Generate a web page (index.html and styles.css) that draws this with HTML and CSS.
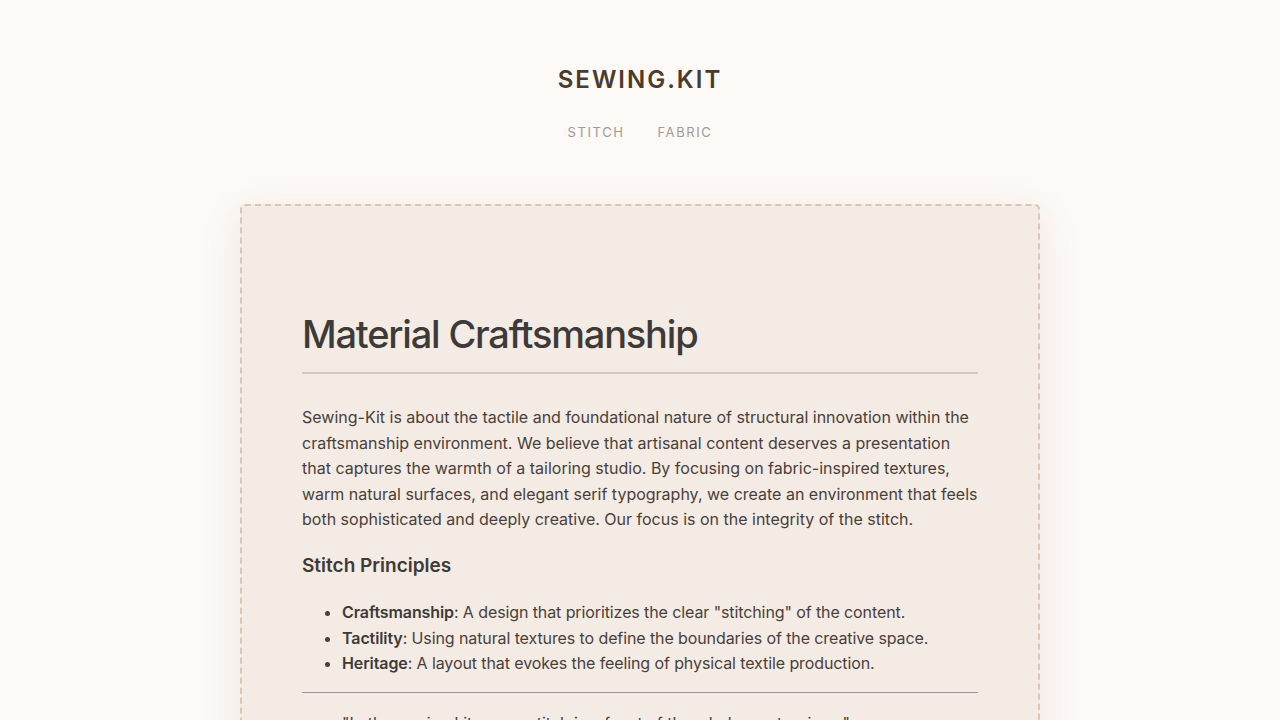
FILE: index.html
```html
<!DOCTYPE html>
<html lang="en">
<head>
  <meta charset="UTF-8">
  <meta name="viewport" content="width=device-width, initial-scale=1">
  <title>Sewing.Kit</title>
  <link rel="stylesheet" href="styles.css">
</head>
<body>

  <header class="site-header">
    <h1 class="logo">SEWING.KIT</h1>
    <nav class="nav">
      <a href="#">Stitch</a>
      <a href="#">Fabric</a>
    </nav>
  </header>

  <main class="card">
    <h2>Material Craftsmanship</h2>
    <p>Sewing-Kit is about the tactile and foundational nature of structural innovation within the craftsmanship environment. We believe that artisanal content deserves a presentation that captures the warmth of a tailoring studio. By focusing on fabric-inspired textures, warm natural surfaces, and elegant serif typography, we create an environment that feels both sophisticated and deeply creative. Our focus is on the integrity of the stitch.</p>

    <h3>Stitch Principles</h3>
    <ul>
      <li><strong>Craftsmanship</strong>: A design that prioritizes the clear "stitching" of the content.</li>
      <li><strong>Tactility</strong>: Using natural textures to define the boundaries of the creative space.</li>
      <li><strong>Heritage</strong>: A layout that evokes the feeling of physical textile production.</li>
    </ul>

    <hr>

    <blockquote>"In the sewing kit, every stitch is a facet of the whole masterpiece."</blockquote>
  </main>

</body>
</html>
```

FILE: styles.css
```css
* {
  margin: 0;
  padding: 0;
  box-sizing: border-box;
}

body {
  background: #fdf9f6;
  font-family: 'Inter', sans-serif;
  color: #4a403a;
}

.site-header {
  text-align: center;
  padding-top: 64px;
}

.logo {
  font-size: 24px;
  font-weight: 600;
  letter-spacing: 2px;
  color: #4a3b2c;
  line-height: 32px;
}

.nav {
  display: flex;
  justify-content: center;
  gap: 33px;
  margin-top: 28px;
}

.nav a {
  font-size: 13px;
  letter-spacing: 1.6px;
  text-transform: uppercase;
  color: #9e9a97;
  text-decoration: none;
}

.card {
  width: 800px;
  margin: 64px auto 0;
  padding: 104px 60px 60px;
  background: #f3ebe4;
  border: 2px dashed #d8c6b8;
  border-radius: 5px;
  box-shadow: 0 10px 40px rgba(120, 90, 60, 0.12);
}

.card h2 {
  font-size: 38px;
  font-weight: 500;
  line-height: 48px;
  letter-spacing: -1.2px;
  color: #3d3a38;
  padding-bottom: 14px;
  border-bottom: 2px solid #d8c6b8;
  margin-bottom: 31px;
}

.card p {
  font-size: 16px;
  line-height: 25.6px;
}

.card h3 {
  font-size: 19px;
  font-weight: 600;
  color: #3d3a38;
  margin: 21px 0 23px;
}

.card ul {
  padding-left: 40px;
  font-size: 16px;
  line-height: 25.6px;
  letter-spacing: -0.1px;
}

.card strong {
  font-weight: 600;
  color: #3d3a38;
}

.card hr {
  border: none;
  border-top: 1px solid #9a9590;
  margin: 15px 0 18px;
}

.card blockquote {
  padding-left: 40px;
  font-size: 16px;
  line-height: 25.6px;
}
```
